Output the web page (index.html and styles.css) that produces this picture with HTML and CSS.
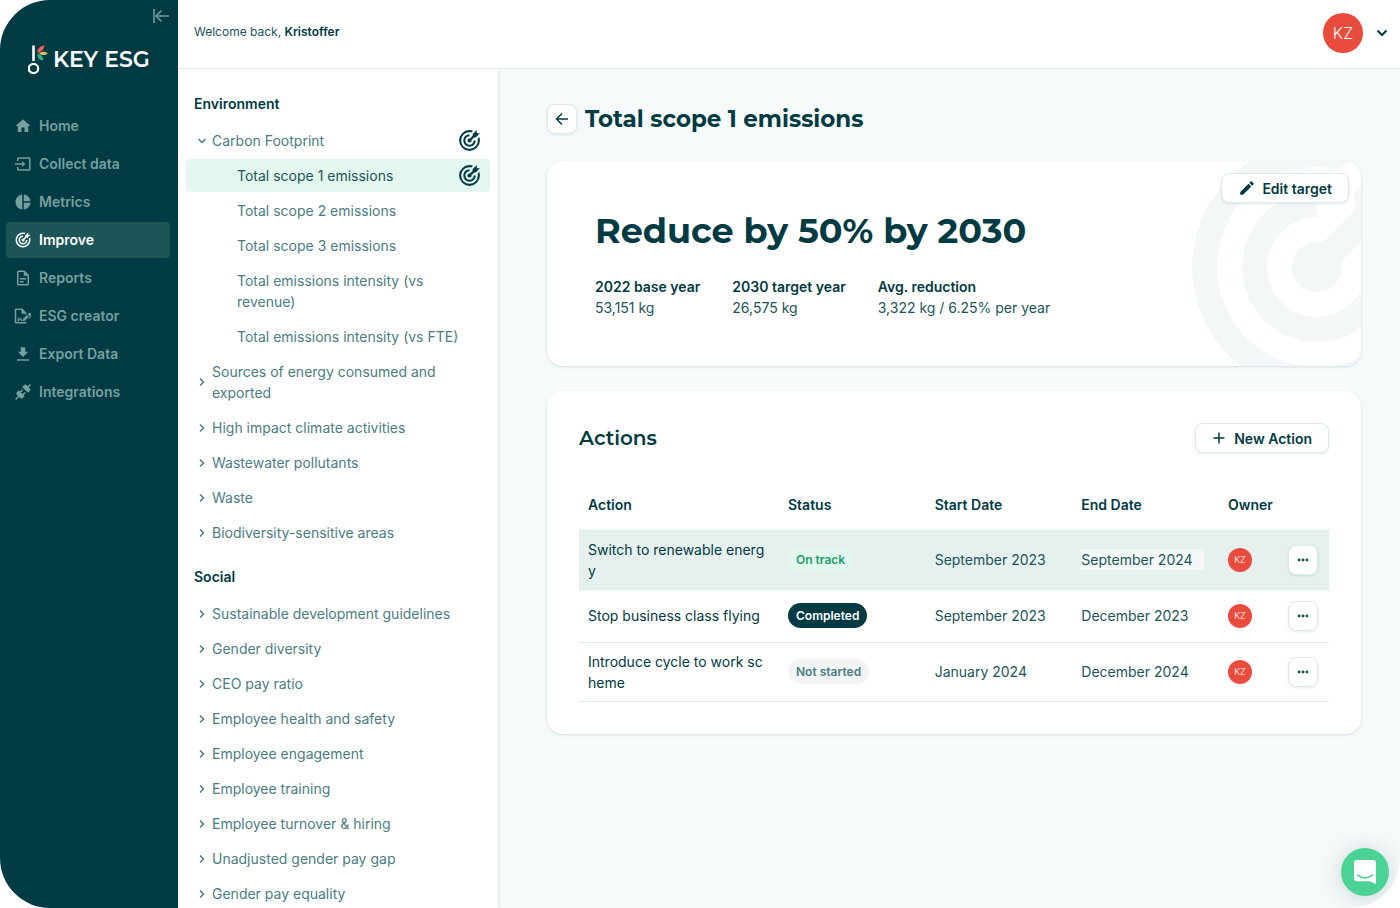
FILE: index.html
```html
<!DOCTYPE html>
<html lang="en">
<head>
<meta charset="utf-8">
<meta name="viewport" content="width=device-width, initial-scale=1">
<title>KEY ESG – Improve</title>
<link rel="stylesheet" href="styles.css">
</head>
<body>
<svg class="sprite" aria-hidden="true">
  <symbol id="target" viewBox="0 0 24 24"><path d="M12 2A10 10 0 0 0 2 12A10 10 0 0 0 12 22A10 10 0 0 0 22 12C22 10.84 21.79 9.69 21.39 8.61L19.79 10.21C19.93 10.8 20 11.4 20 12A8 8 0 0 1 12 20A8 8 0 0 1 4 12A8 8 0 0 1 12 4C12.6 4 13.2 4.07 13.79 4.21L15.4 2.6C14.31 2.21 13.16 2 12 2M19 2L15 6V7.5L12.45 10.05C12.3 10 12.15 10 12 10A2 2 0 0 0 10 12A2 2 0 0 0 12 14A2 2 0 0 0 14 12C14 11.85 14 11.7 13.95 11.55L16.5 9H18L22 5H19V2M12 6A6 6 0 0 0 6 12A6 6 0 0 0 12 18A6 6 0 0 0 18 12H16A4 4 0 0 1 12 16A4 4 0 0 1 8 12A4 4 0 0 1 12 8V6Z"/></symbol>
  <symbol id="chev" viewBox="0 0 16 16"><path d="M6 4.500L9.500 8L6 11.500" fill="none" stroke="currentColor" stroke-width="1.500"/></symbol>
  <symbol id="dots" viewBox="0 0 16 16"><circle cx="3.500" cy="8" r="1.700"/><circle cx="8" cy="8" r="1.700"/><circle cx="12.500" cy="8" r="1.700"/></symbol>
</svg>
<div class="app">
  <aside class="sidebar">
    <button class="collapse" aria-label="Collapse menu"><svg viewBox="0 0 16 14" width="16" height="14"><path d="M1 0V14M16 7H3M8.500 1.500L3 7L8.500 12.500" fill="none" stroke="currentColor" stroke-width="1.500"/></svg></button>
    <a class="logo" href="#">
      <svg viewBox="0 0 20 30" width="20" height="30"><path d="M5.500 0.500V16" stroke="#fff" stroke-width="2.600"/><circle cx="5.500" cy="23.500" r="4.700" fill="none" stroke="#fff" stroke-width="2.200"/><path d="M9.500 8C9 4 12 1 16 .5C16.500 4 13 7 9.500 8Z" fill="#ef6351"/><path d="M11 8.500C13.500 6 17 6 20 8.500C17 10.500 13.500 10.500 11 8.500Z" fill="#e9b365"/><path d="M9.500 9C13 9.500 15.500 12 15 15.500C11.500 15.500 9 12.500 9.500 9Z" fill="#2db585"/></svg>
      <span>KEY ESG</span>
    </a>
    <nav class="nav">
      <a href="#"><svg viewBox="0 0 24 24"><path d="M10,20V14H14V20H19V12H22L12,3L2,12H5V20H10Z"/></svg>Home</a>
      <a href="#"><svg viewBox="0 0 24 24"><path d="M20 3H6C4.900 3 4 3.900 4 5V8H6V5H20V19H6V16H4V19C4 20.100 4.900 21 6 21H20C21.100 21 22 20.100 22 19V5C22 3.900 21.100 3 20 3M11 16L15 12L11 8V11H1V13H11V16Z"/></svg>Collect data</a>
      <a href="#"><svg viewBox="0 0 24 24"><path d="M11 2v20c-5.070-.5-9-4.790-9-10s3.930-9.500 9-10zm2 0v9h9c-.47-4.740-4.240-8.520-9-9zm0 11v9c4.740-.47 8.500-4.250 9-9h-9z"/></svg>Metrics</a>
      <a href="#" class="active" aria-current="page"><svg><use href="#target"/></svg>Improve</a>
      <a href="#"><svg viewBox="0 0 24 24"><path d="M6,2A2,2 0 0,0 4,4V20A2,2 0 0,0 6,22H18A2,2 0 0,0 20,20V8L14,2H6M6,4H13V9H18V20H6V4M8,12V14H16V12H8M8,16V18H13V16H8Z"/></svg>Reports</a>
      <a href="#"><svg viewBox="0 0 24 24"><path d="M19.700 12.900L14 18.600H11.700V16.300L17.400 10.600L19.700 12.900M23.100 12.100C23.100 12.400 22.800 12.700 22.500 13L20 15.500L19.100 14.600L21.700 12L21.100 11.400L20.400 12.100L18.100 9.800L20.300 7.700C20.500 7.500 20.900 7.500 21.200 7.700L22.600 9.100C22.800 9.300 22.800 9.700 22.600 10C22.400 10.200 22.200 10.400 22.200 10.600C22.200 10.800 22.400 11 22.600 11.200C22.900 11.500 23.200 11.800 23.100 12.100M3 20V4H10V9H15V10.500L17 8.500V8L11 2H3C1.900 2 1 2.900 1 4V20C1 21.100 1.900 22 3 22H15C16.100 22 17 21.100 17 20H3M11 17.100C10.800 17.100 10.600 17.200 10.500 17.200L10 15H8.500L6.400 16.700L7 14H5.500L4.500 19H6L8.900 16.400L9.500 18.700H10.500L11 18.600V17.100Z"/></svg>ESG creator</a>
      <a href="#"><svg viewBox="0 0 24 24"><path d="M4,21H20V19H4M19,9H15V3H9V9H5L12,16L19,9Z"/></svg>Export Data</a>
      <a href="#"><svg viewBox="0 0 24 24"><path d="M21.400 7.500C22.200 8.300 22.200 9.600 21.400 10.300L18.600 13.100L10.800 5.300L13.600 2.500C14.400 1.700 15.700 1.700 16.400 2.500L18.200 4.300L21.200 1.300L22.600 2.700L19.600 5.700L21.400 7.500M15.600 13.300L14.200 11.900L11.400 14.700L9.300 12.600L12.100 9.800L10.700 8.400L7.900 11.200L6.400 9.800L3.600 12.600C2.800 13.400 2.800 14.700 3.600 15.400L5.400 17.200L1.400 21.200L2.800 22.600L6.800 18.600L8.600 20.400C9.400 21.200 10.700 21.200 11.400 20.400L14.200 17.600L12.800 16.200L15.600 13.300Z"/></svg>Integrations</a>
    </nav>
  </aside>
  <div class="page">
    <header class="topbar">
      <p>Welcome back, <strong>Kristoffer</strong></p>
      <button class="account" aria-label="Account menu"><span class="avatar">KZ</span><svg viewBox="0 0 14 14" width="14" height="14"><path d="M2.500 4.500L7 9L11.500 4.500" fill="none" stroke="currentColor" stroke-width="2"/></svg></button>
    </header>
    <div class="columns">
      <nav class="tree" aria-label="Metrics">
        <section>
          <h2>Environment</h2>
          <a href="#" class="open"><svg><use href="#chev"/></svg><span>Carbon Footprint</span><svg class="goal"><use href="#target"/></svg></a>
          <a href="#" class="child selected"><span>Total scope 1 emissions</span><svg class="goal"><use href="#target"/></svg></a>
          <a href="#" class="child"><span>Total scope 2 emissions</span></a>
          <a href="#" class="child"><span>Total scope 3 emissions</span></a>
          <a href="#" class="child"><span>Total emissions intensity (vs revenue)</span></a>
          <a href="#" class="child"><span>Total emissions intensity (vs FTE)</span></a>
          <a href="#"><svg><use href="#chev"/></svg><span>Sources of energy consumed and exported</span></a>
          <a href="#"><svg><use href="#chev"/></svg><span>High impact climate activities</span></a>
          <a href="#"><svg><use href="#chev"/></svg><span>Wastewater pollutants</span></a>
          <a href="#"><svg><use href="#chev"/></svg><span>Waste</span></a>
          <a href="#"><svg><use href="#chev"/></svg><span>Biodiversity-sensitive areas</span></a>
        </section>
        <section>
          <h2>Social</h2>
          <a href="#"><svg><use href="#chev"/></svg><span>Sustainable development guidelines</span></a>
          <a href="#"><svg><use href="#chev"/></svg><span>Gender diversity</span></a>
          <a href="#"><svg><use href="#chev"/></svg><span>CEO pay ratio</span></a>
          <a href="#"><svg><use href="#chev"/></svg><span>Employee health and safety</span></a>
          <a href="#"><svg><use href="#chev"/></svg><span>Employee engagement</span></a>
          <a href="#"><svg><use href="#chev"/></svg><span>Employee training</span></a>
          <a href="#"><svg><use href="#chev"/></svg><span>Employee turnover &amp; hiring</span></a>
          <a href="#"><svg><use href="#chev"/></svg><span>Unadjusted gender pay gap</span></a>
          <a href="#"><svg><use href="#chev"/></svg><span>Gender pay equality</span></a>
        </section>
      </nav>
      <main class="main">
        <div class="title">
          <button class="btn square" aria-label="Back"><svg viewBox="0 0 16 16" width="16" height="16"><path d="M14 8H3M8 2.500L2.500 8L8 13.500" fill="none" stroke="currentColor" stroke-width="1.500"/></svg></button>
          <h1>Total scope 1 emissions</h1>
        </div>
        <section class="card goal-card">
          <svg class="watermark" aria-hidden="true"><use href="#target"/></svg>
          <button class="btn edit"><svg viewBox="0 0 24 24" width="18" height="18"><path d="M20.710,7.040C21.100,6.650 21.100,6 20.710,5.630L18.370,3.290C18,2.900 17.350,2.900 16.960,3.290L15.120,5.120L18.870,8.870M3,17.250V21H6.750L17.810,9.930L14.060,6.180L3,17.250Z"/></svg>Edit target</button>
          <h2 class="goal-title">Reduce by 50% by 2030</h2>
          <dl class="stats">
            <div><dt>2022 base year</dt><dd>53,151 kg</dd></div>
            <div><dt>2030 target year</dt><dd>26,575 kg</dd></div>
            <div><dt>Avg. reduction</dt><dd>3,322 kg / 6.25% per year</dd></div>
          </dl>
        </section>
        <section class="card actions">
          <div class="actions-head">
            <h2>Actions</h2>
            <button class="btn"><svg viewBox="0 0 14 14" width="14" height="14"><path d="M7 1.500V12.500M1.500 7H12.500" stroke="currentColor" stroke-width="1.500"/></svg>New Action</button>
          </div>
          <table>
            <colgroup><col class="c-action"><col><col><col><col class="c-owner"><col class="c-menu"></colgroup>
            <thead><tr><th>Action</th><th>Status</th><th>Start Date</th><th>End Date</th><th>Owner</th><td></td></tr></thead>
            <tbody>
              <tr class="hover"><td class="name">Switch to renewable energy</td><td><span class="badge track">On track</span></td><td>September 2023</td><td><span class="date">September 2024</span></td><td><span class="avatar small">KZ</span></td><td><button class="btn square" aria-label="More"><svg width="14" height="14"><use href="#dots"/></svg></button></td></tr>
              <tr><td class="name">Stop business class flying</td><td><span class="badge done">Completed</span></td><td>September 2023</td><td>December 2023</td><td><span class="avatar small">KZ</span></td><td><button class="btn square" aria-label="More"><svg width="14" height="14"><use href="#dots"/></svg></button></td></tr>
              <tr><td class="name">Introduce cycle to work scheme</td><td><span class="badge idle">Not started</span></td><td>January 2024</td><td>December 2024</td><td><span class="avatar small">KZ</span></td><td><button class="btn square" aria-label="More"><svg width="14" height="14"><use href="#dots"/></svg></button></td></tr>
            </tbody>
          </table>
        </section>
      </main>
    </div>
  </div>
  <button class="chat" aria-label="Open chat"><svg viewBox="0 0 24 26" width="22" height="24"><path d="M3 0H21Q24 0 24 3V26L17 23H3Q0 23 0 20V3Q0 0 3 0Z" fill="#fff"/><path d="M4 16.500Q12 22.500 20 16.500" fill="none" stroke="#4bd396" stroke-width="1.800" stroke-linecap="round"/></svg></button>
</div>
</body>
</html>
```

FILE: styles.css
```css
:root {
  --dark: #003a42;
  --muted: #4a7d7f;
  --line: #dcebea;
  --display: Montserrat, Inter, "Liberation Sans", sans-serif;
}
* { box-sizing: border-box; }
body, h1, h2, p, dl, dd { margin: 0; }
body {
  font: 14px/21px Inter, "Liberation Sans", sans-serif;
  color: var(--dark);
  background: #fff;
}
a { color: inherit; text-decoration: none; }
button { font: inherit; color: inherit; cursor: pointer; }
svg { fill: currentColor; flex: none; display: block; }
.sprite { position: absolute; width: 0; height: 0; }

.app {
  position: relative;
  display: flex;
  height: 100vh;
  overflow: hidden;
  border-radius: 50px;
  background: #f6fafb;
}

.sidebar {
  flex: none;
  width: 178px;
  padding: 8px 8px 0 6px;
  background: var(--dark);
  color: #75a09f;
}
.collapse {
  display: block;
  margin-left: auto;
  padding: 1px;
  border: 0;
  background: none;
}
.logo {
  display: flex;
  align-items: center;
  gap: 5px;
  margin: 21px 0 33px 22px;
  color: #fff;
  font: 600 22px/30px var(--display);
}
.nav { display: grid; gap: 2px; }
.nav a {
  display: flex;
  align-items: center;
  gap: 7px;
  height: 36px;
  padding: 0 8px 1px;
  border-radius: 4px;
  font-weight: 600;
}
.nav svg { width: 18px; height: 18px; }
.nav .active { background: #1b5557; color: #fff; }

.page { flex: 1; min-width: 0; display: flex; flex-direction: column; }
.topbar {
  flex: none;
  display: flex;
  align-items: center;
  justify-content: space-between;
  height: 69px;
  padding: 0 11px 3px 16px;
  border-bottom: 1px solid var(--line);
  background: #fff;
  font-size: 12px;
}
.topbar p { margin-bottom: 2px; color: #1b5557; }
.topbar strong { font-weight: 600; color: var(--dark); }
.account {
  display: flex;
  align-items: center;
  gap: 12px;
  padding: 0;
  border: 0;
  background: none;
}
.avatar {
  display: grid;
  place-items: center;
  width: 40px;
  height: 40px;
  border-radius: 50%;
  background: #e94b3c;
  color: #fff;
  font: 300 16px/20px Inter, sans-serif;
}
.avatar.small { width: 24px; height: 24px; font-size: 9px; line-height: 12px; }

.columns { flex: 1; min-height: 0; display: flex; overflow: hidden; }
.tree {
  flex: none;
  width: 320px;
  padding: 24px 8px;
  overflow: hidden;
  background: #fff;
  box-shadow: 0 0 4px #003a4230;
  color: var(--muted);
}
.tree section { display: grid; gap: 2px; margin-bottom: 17px; }
.tree h2 {
  margin-bottom: 8px;
  padding: 0 8px;
  color: var(--dark);
  font-size: 14px;
  line-height: 21px;
  font-weight: 600;
}
.tree a {
  display: flex;
  align-items: center;
  gap: 2px;
  padding: 6px 8px;
  border-radius: 4px;
}
.tree a > span { flex: 1; }
.tree svg { width: 16px; height: 16px; }
.tree .open svg:first-child { transform: rotate(90deg); }
.tree .goal { width: 25px; height: 25px; margin: -2px 0; color: var(--dark); }
.tree .child { padding-left: 51px; }
.tree .selected { background: #e3f7ee; color: #1b5557; }

.main {
  flex: 1;
  min-width: 0;
  padding: 32px 39px 32px 49px;
  overflow: hidden;
}
.title {
  display: flex;
  align-items: center;
  gap: 8px;
  margin: 2px 0 26px;
}
h1 { font: 700 23px/32px var(--display); }
.btn {
  display: inline-flex;
  align-items: center;
  justify-content: center;
  gap: 6px;
  height: 30px;
  padding: 0 16px;
  border: 1px solid var(--line);
  border-radius: 8px;
  background: #fff;
  box-shadow: 0 1px 3px #003a421a;
  font-weight: 600;
}
.btn.square { width: 30px; padding: 0; }
.card {
  border-radius: 16px;
  background: #fff;
  box-shadow: 0 1px 3px #003a4226;
}
.goal-card {
  position: relative;
  overflow: hidden;
  margin-bottom: 25px;
  padding: 48px;
}
.watermark {
  position: absolute;
  top: -44px;
  right: -106px;
  width: 300px;
  height: 300px;
  color: #f3f7f8;
}
.edit { position: absolute; top: 12px; right: 12px; }
.goal-title { margin-bottom: 23px; font: 700 35px/44px var(--display); }
.stats { position: relative; display: flex; gap: 32px; }
.stats dt { font-weight: 600; }
.stats dd { color: #1b5557; }

.actions { padding: 32px; }
.actions-head {
  display: flex;
  align-items: center;
  justify-content: space-between;
  margin-bottom: 27px;
}
.actions-head h2 { font: 600 20px/30px var(--display); }
.actions-head .btn { gap: 8px; }
table { width: 100%; table-layout: fixed; border-collapse: collapse; }
.c-action { width: 200px; }
.c-owner { width: 60px; }
.c-menu { width: 50px; }
th, td {
  padding: 8px 0 8px 9px;
  border-bottom: 1px solid var(--line);
  text-align: left;
  vertical-align: middle;
}
th { height: 50px; font-weight: 600; white-space: nowrap; }
td { height: 53px; color: #1b5557; }
thead td { height: 50px; }
.name { padding-right: 9px; color: var(--dark); word-break: break-all; }
.hover td { background: #e6f0ef; }
.date { display: block; margin-right: 15px; background: #f3f7f8; }
.badge {
  display: inline-block;
  padding: 2px 8px;
  border-radius: 13px;
  font-size: 12px;
  font-weight: 600;
}
.track { background: #e3f7ee; color: #1d9e68; }
.done { background: var(--dark); color: #fff; }
.idle { background: #f1f5f6; color: var(--muted); }

.chat {
  position: absolute;
  right: 11px;
  bottom: 12px;
  display: grid;
  place-items: center;
  width: 48px;
  height: 48px;
  padding: 0;
  border: 0;
  border-radius: 50%;
  background: #4bd396;
  box-shadow: 0 2px 24px #003a4233;
}
```
